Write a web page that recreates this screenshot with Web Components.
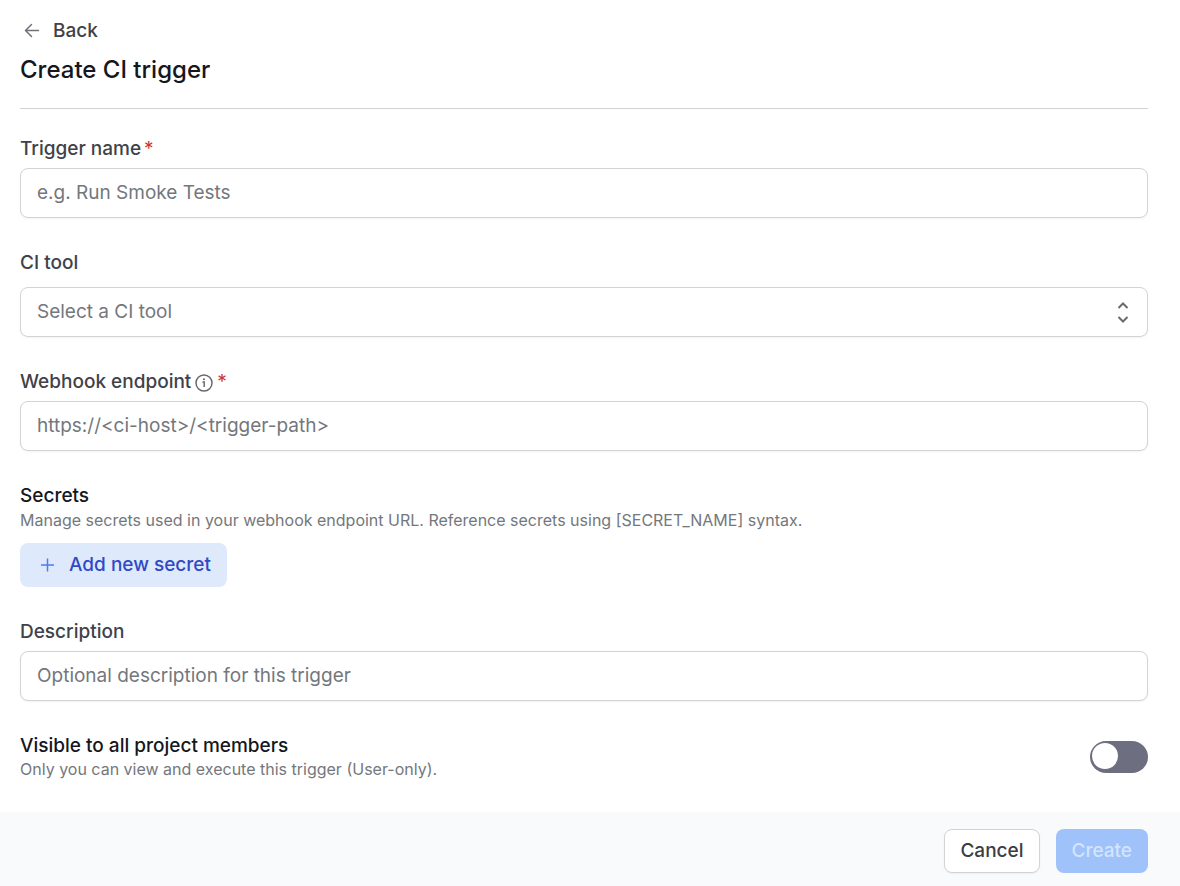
<!DOCTYPE html>
<html lang="en">
<head>
<meta charset="UTF-8">
<meta name="viewport" content="width=device-width, initial-scale=1.0">
<title>Create CI trigger</title>
<style>
    :root {
        --text-strong: #15171c;
        --text-label: #3f4248;
        --text-muted: #74777c;
        --border-color: #d1d3d6;
        --danger-color: #c9372c;
        --radius: 8px;
    }

    body {
        margin: 0;
        background: #fff;
        color: var(--text-strong);
        font-family: Inter, "Liberation Sans", sans-serif;
        font-size: 19px;
        line-height: 24px;
    }
</style>
</head>
<body>
<trigger-page>
    <page-header slot="header" heading="Create CI trigger"></page-header>

    <form-field label="Trigger name" placeholder="e.g. Run Smoke Tests" required></form-field>
    <select-field label="CI tool" placeholder="Select a CI tool"></select-field>
    <form-field label="Webhook endpoint" placeholder="https://&lt;ci-host&gt;/&lt;trigger-path&gt;" required>
        <info-icon slot="info"></info-icon>
    </form-field>
    <text-section heading="Secrets">
        Manage secrets used in your webhook endpoint URL. Reference secrets using [SECRET_NAME] syntax.
        <app-button slot="action" variant="soft">
            <svg slot="icon" width="23" height="22" viewBox="0 0 23 22" fill="none" stroke="#4c7df0" stroke-width="1.5">
                <path d="M11.500 4.500v13M5 11h13"/>
            </svg>
            Add new secret
        </app-button>
    </text-section>
    <form-field label="Description" placeholder="Optional description for this trigger"></form-field>
    <toggle-row label="Visible to all project members">Only you can view and execute this trigger (User-only).</toggle-row>

    <app-button slot="footer" variant="outline">Cancel</app-button>
    <app-button slot="footer" variant="primary" disabled>Create</app-button>
</trigger-page>

<script>
class TriggerPage extends HTMLElement {
    constructor() {
        super();
        this.attachShadow({ mode: 'open' });
        this.shadowRoot.innerHTML = `
            <style>
                :host {
                    display: flex;
                    flex-direction: column;
                    min-height: 100vh;
                }

                main {
                    flex: 1;
                    padding: 16px 32px 32px 20px;
                }

                .fields {
                    display: flex;
                    flex-direction: column;
                    gap: 33px;
                    padding-top: 28px;
                }

                footer {
                    display: flex;
                    justify-content: flex-end;
                    gap: 16px;
                    padding: 17px 32px 13px;
                    background: #f9fafc;
                }
            </style>
            <main>
                <slot name="header"></slot>
                <div class="fields"><slot></slot></div>
            </main>
            <footer><slot name="footer"></slot></footer>
        `;
    }
}

class PageHeader extends HTMLElement {
    constructor() {
        super();
        this.attachShadow({ mode: 'open' });
        this.shadowRoot.innerHTML = `
            <style>
                :host {
                    display: flex;
                    flex-direction: column;
                    align-items: flex-start;
                    gap: 8px;
                    padding-bottom: 22px;
                    border-bottom: 1px solid var(--border-color);
                }

                a {
                    display: flex;
                    align-items: center;
                    gap: 10px;
                    height: 30px;
                    color: var(--text-label);
                    font-weight: 500;
                    text-decoration: none;
                }

                h1 {
                    margin: 0;
                    font-size: 24px;
                    font-weight: 500;
                    line-height: 32px;
                }
            </style>
            <a href="#">
                <svg width="23" height="22" viewBox="0 0 23 22" fill="none" stroke="#6f7379" stroke-width="1.500" stroke-linecap="round" stroke-linejoin="round">
                    <path d="M18.500 10.500H5.500M11.500 4.500L5.500 10.500L11.500 16.500"/>
                </svg>
                <span>Back</span>
            </a>
            <h1></h1>
        `;
        this.shadowRoot.querySelector('h1').textContent = this.getAttribute('heading');
    }
}

const fieldStyles = `
    :host {
        display: flex;
        flex-direction: column;
        gap: 7px;
    }

    .label-row {
        display: flex;
        align-items: center;
        gap: 3px;
        color: var(--text-label);
        font-weight: 500;
    }

    .required {
        color: var(--danger-color);
        font-weight: 400;
    }

    input, select {
        width: 100%;
        height: 50px;
        padding: 0 16px;
        border: 1px solid var(--border-color);
        border-radius: var(--radius);
        background: #fff;
        box-shadow: 0 1px 2px rgba(0, 0, 0, 0.05);
        color: var(--text-muted);
        font: inherit;
        box-sizing: border-box;
    }

    input {
        padding-bottom: 2px;
    }

    input::placeholder {
        color: var(--text-muted);
        opacity: 1;
    }
`;

class FormField extends HTMLElement {
    constructor() {
        super();
        this.attachShadow({ mode: 'open' });
        this.shadowRoot.innerHTML = `
            <style>${fieldStyles}</style>
            <div class="label-row">
                <label for="control"></label>
                <slot name="info"></slot>
            </div>
            <input type="text" id="control">
        `;
        this.shadowRoot.querySelector('label').textContent = this.getAttribute('label');

        const input = this.shadowRoot.querySelector('input');
        input.placeholder = this.getAttribute('placeholder');
        if (this.hasAttribute('required')) {
            input.required = true;
            const mark = document.createElement('span');
            mark.className = 'required';
            mark.textContent = '*';
            this.shadowRoot.querySelector('.label-row').appendChild(mark);
        }
    }
}

class SelectField extends HTMLElement {
    constructor() {
        super();
        this.attachShadow({ mode: 'open' });
        this.shadowRoot.innerHTML = `
            <style>
                ${fieldStyles}

                :host {
                    gap: 12px;
                }

                .select-box {
                    display: grid;
                    align-items: center;
                }

                select, svg {
                    grid-area: 1 / 1;
                }

                select {
                    appearance: none;
                }

                svg {
                    justify-self: end;
                    margin-right: 14px;
                    pointer-events: none;
                }
            </style>
            <div class="label-row"><label for="control"></label></div>
            <div class="select-box">
                <select id="control"><option value=""></option></select>
                <svg width="22" height="24" viewBox="0 0 22 24" fill="none" stroke="#6b6b6f" stroke-width="2">
                    <path d="M6.500 8L11 3.500L15.500 8M6.500 17L11 21.500L15.500 17"/>
                </svg>
            </div>
        `;
        this.shadowRoot.querySelector('label').textContent = this.getAttribute('label');
        this.shadowRoot.querySelector('option').textContent = this.getAttribute('placeholder');
    }
}

class InfoIcon extends HTMLElement {
    constructor() {
        super();
        this.attachShadow({ mode: 'open' });
        this.shadowRoot.innerHTML = `
            <style>
                :host {
                    display: inline-flex;
                    padding-top: 2px;
                }
            </style>
            <svg width="20" height="20" viewBox="0 0 20 20" fill="none" stroke="#66696e" stroke-width="1.500">
                <circle cx="10" cy="10" r="8"/>
                <path d="M8.500 9H10.200V14"/>
                <circle cx="10" cy="6.300" r="1" fill="#66696e" stroke="none"/>
            </svg>
        `;
    }
}

class TextSection extends HTMLElement {
    constructor() {
        super();
        this.attachShadow({ mode: 'open' });
        this.shadowRoot.innerHTML = `
            <style>
                :host {
                    display: block;
                }

                h2 {
                    margin: 0;
                    font-size: 19px;
                    font-weight: 500;
                }

                p {
                    margin: 0 0 11px;
                    color: var(--text-muted);
                    font-size: 16px;
                }
            </style>
            <h2></h2>
            <p><slot></slot></p>
            <slot name="action"></slot>
        `;
        this.shadowRoot.querySelector('h2').textContent = this.getAttribute('heading');
    }
}

class ToggleRow extends HTMLElement {
    constructor() {
        super();
        this.attachShadow({ mode: 'open' });
        this.shadowRoot.innerHTML = `
            <style>
                :host {
                    display: flex;
                    align-items: center;
                    justify-content: space-between;
                }

                label {
                    display: block;
                    font-weight: 500;
                }

                p {
                    margin: 0;
                    color: var(--text-muted);
                    font-size: 16px;
                    line-height: 22px;
                }

                input {
                    appearance: none;
                    width: 58px;
                    height: 32px;
                    margin: 0;
                    padding: 2px;
                    border-radius: 16px;
                    background: #6d6e80;
                    box-sizing: border-box;
                    cursor: pointer;
                }

                input::before {
                    content: "";
                    display: block;
                    width: 26px;
                    height: 26px;
                    border-radius: 50%;
                    background: #fff;
                }

                input:checked {
                    background: #3b6ff0;
                }

                input:checked::before {
                    margin-left: auto;
                }
            </style>
            <div>
                <label for="toggle"></label>
                <p><slot></slot></p>
            </div>
            <input type="checkbox" role="switch" id="toggle">
        `;
        this.shadowRoot.querySelector('label').textContent = this.getAttribute('label');
    }
}

class AppButton extends HTMLElement {
    constructor() {
        super();
        this.attachShadow({ mode: 'open' });
        this.shadowRoot.innerHTML = `
            <style>
                :host {
                    display: inline-flex;
                    vertical-align: top;
                }

                button {
                    display: flex;
                    align-items: center;
                    gap: 10px;
                    height: 44px;
                    padding: 0 15px;
                    border: 1px solid transparent;
                    border-radius: var(--radius);
                    font: inherit;
                    font-weight: 500;
                    cursor: pointer;
                }

                :host([variant="soft"]) button {
                    background: #dfe9fc;
                    color: #3049c4;
                }

                :host([variant="outline"]) button {
                    border-color: var(--border-color);
                    background: #fff;
                    box-shadow: 0 1px 2px rgba(0, 0, 0, 0.05);
                    color: #3a3d44;
                }

                :host([variant="primary"]) button {
                    background: #9fc2fa;
                    color: #d3e4fd;
                }

                button:disabled {
                    cursor: default;
                }
            </style>
            <button type="button"><slot name="icon"></slot><span><slot></slot></span></button>
        `;
        this.shadowRoot.querySelector('button').disabled = this.hasAttribute('disabled');
    }
}

customElements.define('trigger-page', TriggerPage);
customElements.define('page-header', PageHeader);
customElements.define('form-field', FormField);
customElements.define('select-field', SelectField);
customElements.define('info-icon', InfoIcon);
customElements.define('text-section', TextSection);
customElements.define('toggle-row', ToggleRow);
customElements.define('app-button', AppButton);
</script>
</body>
</html>
